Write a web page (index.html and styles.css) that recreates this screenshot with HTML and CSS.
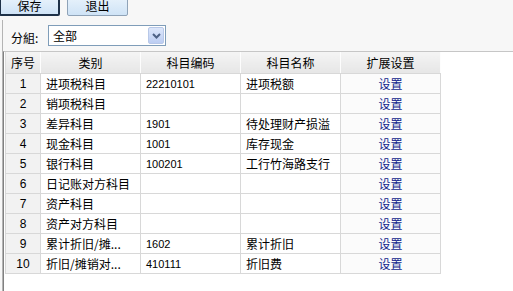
FILE: index.html
```html
<!DOCTYPE html>
<html lang="zh-CN">
<head>
  <meta charset="UTF-8">
  <title>科目设置</title>
  <link rel="stylesheet" href="styles.css">
</head>
<body>

  <div class="toolbar">
    <button class="btn btn-focus">保存</button>
    <button class="btn">退出</button>
  </div>

  <div class="panel">
    <!-- 分组 -->
    <div class="filter">
      <span class="label">分組:</span>
      <div class="select">
        <span class="select-text">全部</span>
        <span class="select-arrow">
          <svg width="9" height="6" viewBox="0 0 9 6"><path d="M1 1 L4.5 4.5 L8 1" fill="none" stroke="#4d6185" stroke-width="2"/></svg>
        </span>
      </div>
    </div>

    <!-- 科目列表 -->
    <div class="grid">
      <table>
        <colgroup>
          <col class="c-no"><col class="c-type"><col class="c-code"><col class="c-name"><col class="c-set">
        </colgroup>
        <thead>
          <tr><th>序号</th><th>类别</th><th>科目编码</th><th>科目名称</th><th>扩展设置</th></tr>
        </thead>
        <tbody id="rows"></tbody>
      </table>
    </div>
  </div>

  <script>
    const rows = [
      ["进项税科目", "22210101", "进项税额"],
      ["销项税科目", "", ""],
      ["差异科目", "1901", "待处理财产损溢"],
      ["现金科目", "1001", "库存现金"],
      ["银行科目", "100201", "工行竹海路支行"],
      ["日记账对方科目", "", ""],
      ["资产科目", "", ""],
      ["资产对方科目", "", ""],
      ["累计折旧/摊...", "1602", "累计折旧"],
      ["折旧/摊销对...", "410111", "折旧费"]
    ];
    document.getElementById("rows").innerHTML = rows.map((r, i) => `
      <tr>
        <td class="no">${i + 1}</td>
        <td>${r[0]}</td>
        <td class="code">${r[1]}</td>
        <td>${r[2]}</td>
        <td class="set"><a href="#">设置</a></td>
      </tr>`).join("");
  </script>

</body>
</html>
```

FILE: styles.css
```css
body {
  margin: 0;
  padding: 0;
  background-color: #f7f7f7;
  font-family: "Liberation Sans", "Noto Sans CJK SC", sans-serif;
  font-size: 12px;
  color: #000;
  height: 291px;
  overflow: hidden;
}
.toolbar {
  height: 17px;
  display: flex;
  align-items: flex-end;
}
.btn {
  width: 61px;
  height: 24px;
  margin: 0;
  padding: 0;
  border: 1px solid #8fa3b8;
  border-radius: 2px;
  background: linear-gradient(#eef6fd, #cfe3f6);
  font-family: "Noto Sans CJK SC", sans-serif;
  font-size: 12px;
  line-height: 12px;
  color: #000;
  margin-bottom: 1px;
  display: flex;
  align-items: flex-start;
  justify-content: center;
  padding-top: 7px;
}
.btn-focus {
  width: 61px;
  margin-left: -1px;
  border: 2px solid #1e3148;
  padding-top: 6px;
}
.btn + .btn {
  margin-left: 7px;
}
.panel {
  margin-top: 3px;
  margin-left: 2px;
  border-left: 1px solid #b4b4b4;
  height: 274px;
  display: flex;
  flex-direction: column;
}
.filter {
  display: flex;
  align-items: center;
  height: 31px;
  padding-left: 8px;
}
.label {
  font-family: "Noto Sans CJK SC", sans-serif;
  width: 37px;
  padding-top: 3px;
}
.select {
  width: 116px;
  height: 19px;
  border: 1px solid #7f9db9;
  background: #fff;
  display: flex;
  align-items: center;
  justify-content: space-between;
}
.select-text {
  padding-left: 4px;
  font-family: "Noto Sans CJK SC", sans-serif;
}
.select-arrow {
  width: 16px;
  height: 17px;
  margin-right: 1px;
  border: 1px solid #b8c8e8;
  border-radius: 2px;
  box-sizing: border-box;
  background: linear-gradient(#dde7fb, #bccdf2);
  display: flex;
  align-items: center;
  justify-content: center;
}
.grid {
  flex: 1;
  background: #fff;
  border-top: 1px solid #c6c6c6;
  border-left: 1px solid #808080;
  padding-left: 1px;
}
table {
  border-collapse: collapse;
  table-layout: fixed;
  width: 435px;
}
.c-no { width: 35px; }
.c-type { width: 100px; }
.c-code { width: 100px; }
.c-name { width: 100px; }
.c-set { width: 100px; }
th {
  height: 21px;
  padding: 0;
  font-weight: normal;
  background: linear-gradient(#f4f4f4, #e6e6e6);
  border-left: 1px solid #dcdcdc;
  border-right: 1px solid #fdfdfd;
  border-bottom: 1px solid #d8d8d8;
  font-family: "Noto Sans CJK SC", sans-serif;
}
td {
  height: 19px;
  padding: 0 0 0 5px;
  border: 1px solid #d8d8d8;
  white-space: nowrap;
  overflow: hidden;
  font-family: "Noto Sans CJK SC", sans-serif;
}
td.no {
  padding: 0;
  text-align: center;
  background: #f2f2f2;
  font-family: "Liberation Sans", sans-serif;
  font-size: 12px;
}
td.code {
  font-family: "Liberation Sans", sans-serif;
  font-size: 11px;
}
td.set {
  padding: 0;
  text-align: center;
  background: #fbfbfb;
}
td.set a {
  color: #101c8c;
  text-decoration: none;
}
```
